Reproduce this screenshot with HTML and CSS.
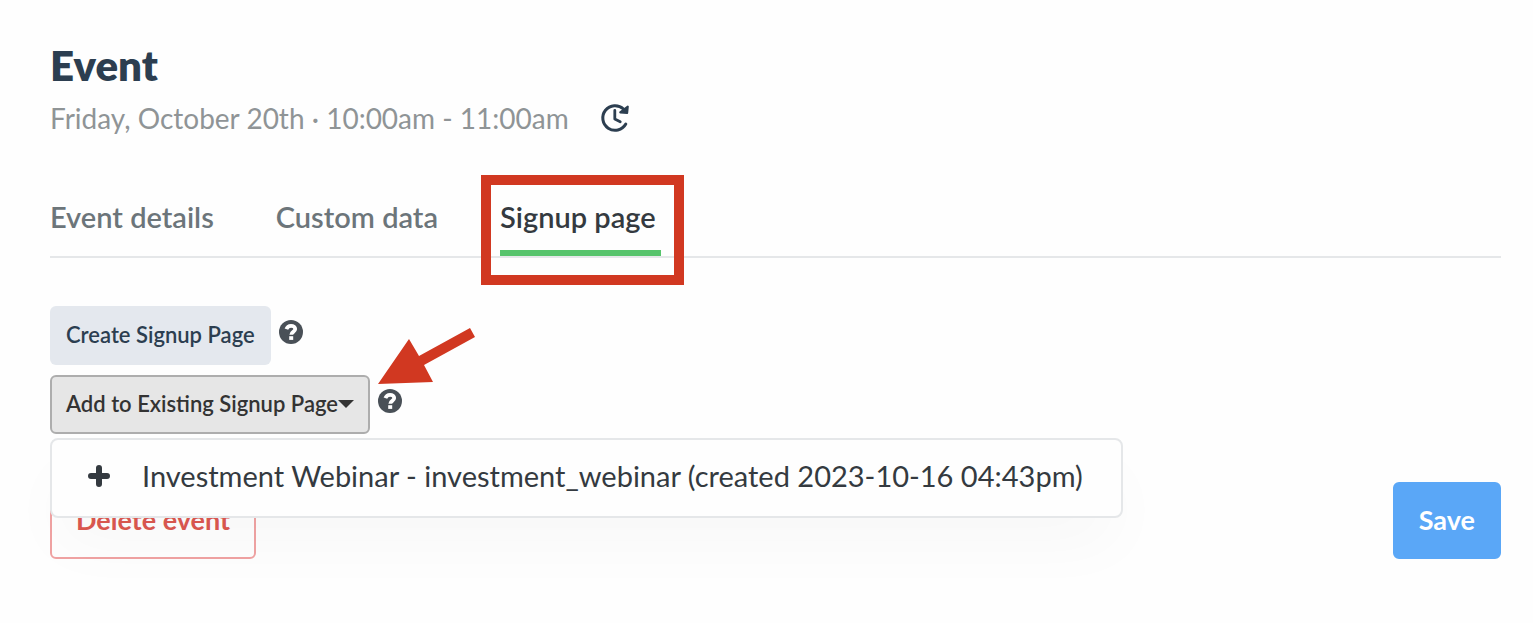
FILE: index.html
```html
<!DOCTYPE html>
<html lang="en">
<head>
    <meta charset="UTF-8">
    <meta name="viewport" content="width=device-width, initial-scale=1.0">
    <title>Event</title>
    <link rel="stylesheet" href="styles.css">
</head>
<body>
    <main class="event">
        <h1>Event</h1>
        <div class="event-time">
            <span>Friday, October 20th · 10:00am - 11:00am</span>
            <button class="icon-button" type="button" aria-label="Reschedule">
                <svg width="30" height="30" viewBox="0 0 30 30" fill="none" stroke="#2c3e50" stroke-width="3">
                    <path d="M23.5 6A12.3 12.3 0 1 0 25.8 21" stroke-linecap="round"/>
                    <path d="M14.8 7.5V16l5.4 2.8" stroke-width="2.8" stroke-linecap="round" stroke-linejoin="round"/>
                    <path d="M27.8 3.6l-.6 6.4-7-.6z" fill="#2c3e50" stroke-width="2" stroke-linejoin="round"/>
                </svg>
            </button>
        </div>

        <nav class="tabs">
            <a href="#details">Event details</a>
            <a href="#data">Custom data</a>
            <a href="#signup" class="active">Signup page</a>
        </nav>

        <div class="row">
            <button class="btn btn-create" type="button">Create Signup Page</button>
            <svg class="help" width="24" height="24" viewBox="0 0 24 24">
                <circle cx="12" cy="12" r="12" fill="#495057"/>
                <path d="M7.4 9.2C8.2 6.8 9.9 5.8 12 5.8c2.5 0 4.2 1.4 4.2 3.3 0 2.9-3.9 2.7-3.9 5.7" fill="none" stroke="#fff" stroke-width="3.8"/>
                <path d="M10.2 16.2h4v3.7h-4z" fill="#fff"/>
            </svg>
        </div>

        <div class="row dropdown">
            <button class="btn btn-add" type="button" aria-expanded="true">Add to Existing Signup Page<span class="caret"></span></button>
            <div class="help-wrap">
                <svg class="help" width="24" height="24" viewBox="0 0 24 24">
                    <circle cx="12" cy="12" r="12" fill="#495057"/>
                    <path d="M7.4 9.2C8.2 6.8 9.9 5.8 12 5.8c2.5 0 4.2 1.4 4.2 3.3 0 2.9-3.9 2.7-3.9 5.7" fill="none" stroke="#fff" stroke-width="3.8"/>
                    <path d="M10.2 16.2h4v3.7h-4z" fill="#fff"/>
                </svg>
                <svg class="arrow" width="98" height="58" viewBox="0 0 98 58" fill="#d13821">
                    <path d="M0 57L31 12l10 17L92 1l5 9-51 28 9 17z"/>
                </svg>
            </div>
            <div class="menu">
                <a href="#investment_webinar">
                    <svg width="22" height="22" viewBox="0 0 22 22" stroke="#343a40" stroke-width="6" stroke-linecap="round">
                        <path d="M11 3v16M3 11h16"/>
                    </svg>
                    Investment Webinar - investment_webinar (created 2023-10-16 04:43pm)
                </a>
            </div>
        </div>

        <div class="actions">
            <button class="btn-delete" type="button">Delete event</button>
            <button class="btn-save" type="button">Save</button>
        </div>
    </main>
</body>
</html>
```
FILE: styles.css
```css
* {
    box-sizing: border-box;
}

body {
    margin: 0;
    background: #fefefe;
    color: #343a40;
    font-family: Lato, "Open Sans", sans-serif;
    font-size: 29px;
}

button {
    font-family: inherit;
    cursor: pointer;
}

a {
    color: inherit;
    text-decoration: none;
}

svg {
    display: block;
    flex-shrink: 0;
}

.event {
    padding: 38px 32px 64px 50px;
}

h1 {
    margin: 0;
    color: #2c3e50;
    font-size: 42px;
    line-height: 54px;
    font-weight: 800;
}

.event-time {
    display: flex;
    align-items: center;
    gap: 31px;
    height: 52px;
    color: #8f9496;
    font-size: 28px;
}

.icon-button {
    padding: 0;
    border: 0;
    background: none;
}

.tabs {
    display: flex;
    gap: 62px;
    margin-top: 56px;
    border-bottom: 2px solid #e5e7e9;
    color: #6c757a;
    font-weight: 600;
}

.tabs a {
    padding-bottom: 16px;
    line-height: 34px;
    border-bottom: 6px solid transparent;
}

.tabs .active {
    position: relative;
    min-width: 161px;
    color: #343a40;
    border-bottom-color: #57c46c;
}

/* highlight around the open tab */
.tabs .active::after {
    content: "";
    position: absolute;
    inset: -25px -23px -35px -19px;
    border: 10px solid #d13821;
    pointer-events: none;
}

.row {
    display: flex;
    align-items: flex-start;
    gap: 8px;
    margin-top: 48px;
}

.btn {
    height: 59px;
    padding: 0 14px 2px;
    border: 2px solid transparent;
    border-radius: 6px;
    font-size: 22px;
    font-weight: 600;
}

.btn-create {
    background: #e4e8ee;
    color: #2c3e50;
}

.btn-add {
    display: flex;
    align-items: center;
    background: #e6e6e6;
    border-color: #adadad;
    color: #333;
}

.caret {
    border: 8px solid transparent;
    border-top-color: #333;
    border-bottom: 0;
}

.help {
    margin-top: 14px;
}

.dropdown {
    position: relative;
    margin-top: 10px;
}

.help-wrap {
    position: relative;
}

.arrow {
    position: absolute;
    left: 0;
    bottom: 28px;
}

.menu {
    position: absolute;
    top: 63px;
    left: 0;
    padding: 18px 38px 22px 36px;
    background: #fefefe;
    border: 2px solid #e5e7e9;
    border-radius: 8px;
    box-shadow: 0 32px 64px -8px rgba(0, 0, 0, 0.03);
    white-space: nowrap;
}

.menu a {
    display: flex;
    align-items: center;
    gap: 32px;
    line-height: 36px;
}

.actions {
    display: flex;
    justify-content: space-between;
    margin-top: 48px;
}

.btn-delete,
.btn-save {
    height: 77px;
    padding: 0 24px 2px;
    border: 2px solid #f0a3a3;
    border-radius: 6px;
    background: none;
    color: #dc5850;
    font-size: 27px;
    font-weight: 700;
}

.btn-save {
    background: #5aa7f7;
    border-color: #5aa7f7;
    color: #fff;
}
```
